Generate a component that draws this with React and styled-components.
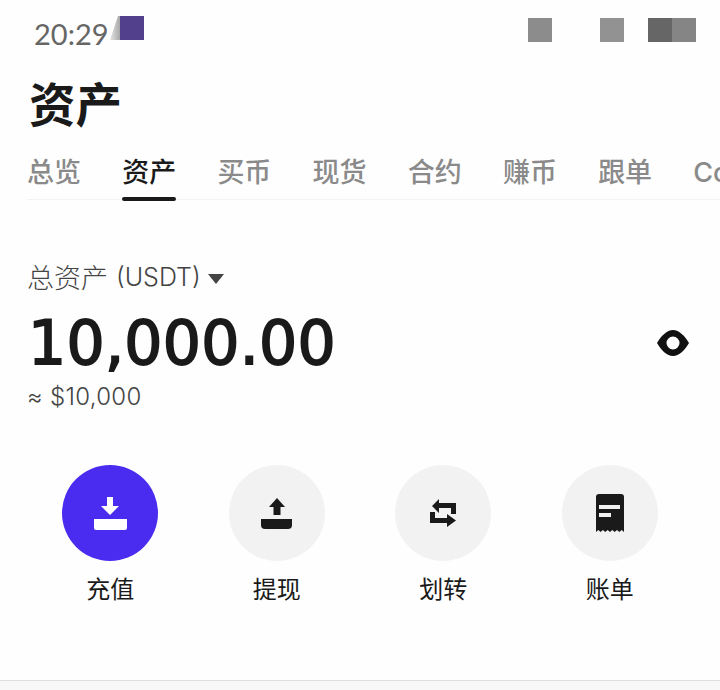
import React from "react";
import styled, { createGlobalStyle } from "styled-components";

const GlobalStyle = createGlobalStyle`
  html, body { margin: 0; padding: 0; background: #fefefe; }
  * { box-sizing: border-box; }
`;

const CJK = `"Noto Sans CJK SC", sans-serif`;
const LATIN = `Inter, "Noto Sans CJK SC", sans-serif`;

const Page = styled.div`
  width: 720px;
  height: 690px;
  overflow: hidden;
  display: flex;
  flex-direction: column;
  background: #fefefe;
  color: #1a1a1a;
`;

const StatusBar = styled.div`
  height: 48px;
  display: flex;
  align-items: flex-start;
  justify-content: space-between;
  padding: 16px 24px 0 34px;
`;

const StatusLeft = styled.div`
  display: flex;
  align-items: flex-start;
`;

const Clock = styled.span`
  width: 76px;
  font: 400 29px/36px Lato, sans-serif;
  color: #666;
`;

const NoticeFade = styled.i`
  display: block;
  width: 10px;
  height: 24px;
  background: linear-gradient(to right, #e4e4e4, #a8a8a8);
  clip-path: polygon(80% 0, 100% 0, 100% 100%, 0 100%);
`;

const NoticeBadge = styled.i`
  display: block;
  width: 24px;
  height: 24px;
  background: #53408c;
`;

const StatusRight = styled.div`
  display: flex;
  margin-top: 2px;
`;

const Indicator = styled.i`
  display: block;
  width: 24px;
  height: 24px;
  margin-left: ${(p) => p.$gap}px;
  background: ${(p) => p.$tone};
`;

const Title = styled.h1`
  margin: 22px 0 0 29px;
  font: 700 46.5px/64px ${CJK};
  color: #1a1a1a;
`;

const TabBar = styled.nav`
  margin: 12px 0 0 27px;
  height: 54px;
  display: flex;
  gap: 41.2px;
  border-bottom: 1px solid #f3f3f3;
  white-space: nowrap;
`;

const Tab = styled.span`
  position: relative;
  flex: none;
  height: 53px;
  font: 500 27px/54px ${LATIN};
  color: ${(p) => (p.$active ? "#1a1a1a" : "#8a8a8a")};
  &::after {
    content: "";
    display: ${(p) => (p.$active ? "block" : "none")};
    position: absolute;
    left: 0;
    right: 0;
    top: 51px;
    height: 4px;
    border-radius: 2px;
    background: #1a1a1a;
  }
`;

const Balance = styled.section`
  margin-top: 57px;
  padding: 0 31px 0 28px;
`;

const BalanceLabel = styled.div`
  display: flex;
  align-items: center;
  gap: 7px;
  height: 40px;
  margin-left: -1px;
  font: 300 27px/40px ${CJK};
  color: #444;
`;

const LabelText = styled.span`
  display: flex;
  align-items: center;
`;

const Unit = styled.span`
  margin-left: 8px;
  font: 300 25px/40px Inter, sans-serif;
`;

const Caret = styled.i`
  display: block;
  width: 0;
  height: 0;
  margin-top: 3px;
  border-left: 8px solid transparent;
  border-right: 8px solid transparent;
  border-top: 10px solid #444;
`;

const AmountRow = styled.div`
  display: flex;
  align-items: center;
  justify-content: space-between;
  height: 64px;
  margin-top: 14px;
`;

const Amount = styled.div`
  font: 400 60px/64px "DejaVu Sans", sans-serif;
  letter-spacing: 0.3px;
  -webkit-text-stroke: 1.8px #1a1a1a;
  color: #1a1a1a;
`;

const Approx = styled.div`
  margin-top: 6px;
  margin-left: -1px;
  font: 300 24px/32px Inter, sans-serif;
  letter-spacing: 0.3px;
  color: #444;
`;

const Actions = styled.div`
  margin: 52px 27px 0;
  display: grid;
  grid-template-columns: repeat(4, 1fr);
`;

const Action = styled.div`
  display: flex;
  flex-direction: column;
  align-items: center;
  gap: 10px;
`;

const Circle = styled.div`
  width: 96px;
  height: 96px;
  border-radius: 50%;
  display: flex;
  align-items: center;
  justify-content: center;
  background: ${(p) => (p.$primary ? "#4a2cf0" : "#f2f2f2")};
`;

const ActionLabel = styled.span`
  font: 400 24px/34px ${CJK};
  color: #1a1a1a;
`;

const Footer = styled.div`
  margin-top: auto;
  height: 10px;
  flex: none;
  background: #f8f8f8;
  border-top: 1px solid #dedede;
`;

const Icon = ({ children, fill = "#1a1a1a" }) => (
  <svg width="48" height="48" viewBox="0 0 48 48" fill={fill}>
    {children}
  </svg>
);

const DepositIcon = () => (
  <Icon fill="#fff">
    <path d="M21 8h6v9h6l-9 9-9-9h6z" />
    <path d="M8 30h33v9a2 2 0 0 1-2 2H10a2 2 0 0 1-2-2z" />
  </Icon>
);

const WithdrawIcon = () => (
  <Icon>
    <path d="M24 9l8 9h-4.500v8h-7v-8H16z" />
    <path d="M8 30h31v6a4 4 0 0 1-4 4H12a4 4 0 0 1-4-4z" />
  </Icon>
);

const TransferIcon = () => (
  <Icon>
    <path d="M20 10v4h17v11h-5v-6H20v5l-7-7z" />
    <path d="M28 38v-4H11V23h5v6h12v-4l9 6.500z" />
  </Icon>
);

const BillIcon = () => (
  <Icon>
    <path d="M13 5h22a3 3 0 0 1 3 3v35l-2.300-2-2.300 2-2.400-2-2.300 2-2.400-2-2.300 2-2.400-2-2.300 2-2.400-2-2.300 2-2.300-2L10 43V8a3 3 0 0 1 3-3z" />
    <path d="M13 16h21v4H13zM13 24h12v4H13z" fill="#f2f2f2" />
  </Icon>
);

const EyeIcon = () => (
  <svg width="32" height="26" viewBox="0 0 32 26">
    <path
      fillRule="evenodd"
      fill="#111"
      d="M16 0c6 0 12 6 16 13-4 7-10 13-16 13S4 20 0 13C4 6 10 0 16 0zm0 6.500a6.500 6.500 0 1 0 0 13 6.500 6.500 0 0 0 0-13z"
    />
  </svg>
);

const tabs = ["总览", "资产", "买币", "现货", "合约", "赚币", "跟单", "Copy"];
const actions = [
  { label: "充值", icon: <DepositIcon />, primary: true },
  { label: "提现", icon: <WithdrawIcon /> },
  { label: "划转", icon: <TransferIcon /> },
  { label: "账单", icon: <BillIcon /> },
];

export default function App() {
  return (
    <Page>
      <GlobalStyle />
      <StatusBar>
        <StatusLeft>
          <Clock>20:29</Clock>
          <NoticeFade />
          <NoticeBadge />
        </StatusLeft>
        <StatusRight>
          <Indicator $tone="#8c8c8c" $gap={0} />
          <Indicator $tone="#929292" $gap={48} />
          <Indicator $tone="#666" $gap={24} />
          <Indicator $tone="#858585" $gap={0} />
        </StatusRight>
      </StatusBar>
      <Title>资产</Title>
      <TabBar>
        {tabs.map((t) => (
          <Tab key={t} $active={t === "资产"}>
            {t}
          </Tab>
        ))}
      </TabBar>
      <Balance>
        <BalanceLabel>
          <LabelText>
            总资产
            <Unit>(USDT)</Unit>
          </LabelText>
          <Caret />
        </BalanceLabel>
        <AmountRow>
          <Amount>10,000.00</Amount>
          <EyeIcon />
        </AmountRow>
        <Approx>≈ $10,000</Approx>
      </Balance>
      <Actions>
        {actions.map((a) => (
          <Action key={a.label}>
            <Circle $primary={a.primary}>{a.icon}</Circle>
            <ActionLabel>{a.label}</ActionLabel>
          </Action>
        ))}
      </Actions>
      <Footer />
    </Page>
  );
}
